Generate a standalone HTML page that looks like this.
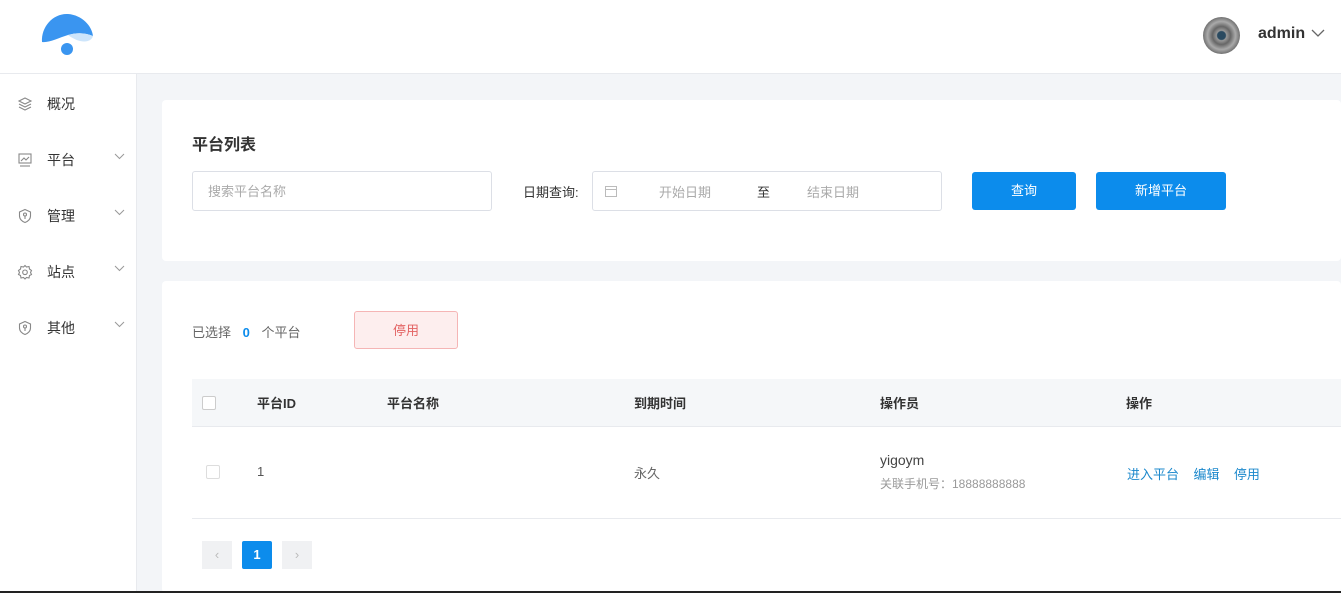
<!DOCTYPE html>
<html><head><meta charset="utf-8"><style>
*{margin:0;padding:0;box-sizing:border-box}
body{width:1341px;height:593px;overflow:hidden;background:#f3f5f8;font-family:"Liberation Sans","Noto Sans CJK SC",sans-serif;font-size:13px;color:#333;position:relative}
.hdr{position:absolute;left:0;top:0;width:1341px;height:74px;background:#fff;border-bottom:1px solid #e8eaee}
.side{position:absolute;left:0;top:74px;width:137px;height:519px;background:#fff;border-right:1px solid #e8eaee}
.mi{position:absolute;left:0;width:137px;height:20px}
.mi span{position:absolute;left:47px;top:0;font-size:14px;color:#333}
.mi svg.ic{position:absolute;left:17px;top:2px}
.mi .ch{position:absolute;left:114px;top:3px}
.card{position:absolute;background:#fff;border-radius:4px}
.abs{position:absolute}
.btn{position:absolute;background:#0c8cec;color:#fff;border-radius:3px;text-align:center;font-size:13px}
</style></head><body>
<div class="hdr">
<svg class="abs" style="left:40px;top:12px" width="56" height="46" viewBox="0 0 56 46"><path d="M2 30 C1 14 14 1 28 2 C42 3 52 14 53 24 C46 21 38 20 28 23 C18 26 9 31 2 30Z" fill="#3a95f0"/><path d="M28 23 C38 20 46 21 53 24 C51 31 40 32 28 23Z" fill="#cde5fb"/><circle cx="27" cy="37" r="6" fill="#3a95f0"/></svg>
<div class="abs" style="left:1203px;top:17px;width:37px;height:37px;border-radius:50%;background:radial-gradient(circle at 50% 50%,#2a4a60 0 4px,#999 5px,#666 9px,#aaa 14px,#777 18px)"></div>
<div class="abs" style="left:1258px;top:25px;font-size:16px;font-weight:bold;color:#333">admin</div>
<svg class="abs" style="left:1311px;top:29px" width="14" height="9"><path d="M1 1 L7 7 L13 1" fill="none" stroke="#666" stroke-width="1.3"/></svg>
</div>
<div class="side">
<div class="mi" style="top:20px"><svg class="ic" width="16" height="16" viewBox="0 0 16 16" fill="none" stroke="#888" stroke-width="1.1"><path d="M8 2 L14 5 L8 8 L2 5Z"/><path d="M2 8 L8 11 L14 8"/><path d="M2 11 L8 14 L14 11"/></svg><span>概况</span></div>
<div class="mi" style="top:76px"><svg class="ic" width="16" height="16" viewBox="0 0 16 16" fill="none" stroke="#888" stroke-width="1.1"><rect x="2" y="2" width="12" height="9"/><path d="M4 9 L7 6 L9 8 L12 5"/><path d="M3 14 H13"/></svg><span>平台</span><svg class="ch" width="11" height="7"><path d="M1 1 L5.5 5.5 L10 1" fill="none" stroke="#999"/></svg></div>
<div class="mi" style="top:132px"><svg class="ic" width="16" height="16" viewBox="0 0 16 16" fill="none" stroke="#888" stroke-width="1.1"><path d="M8 1.5 L13.5 4 V8 C13.5 11 11 13.5 8 14.5 C5 13.5 2.5 11 2.5 8 V4Z"/><circle cx="8" cy="6.5" r="1.5"/><path d="M8 8 V11"/></svg><span>管理</span><svg class="ch" width="11" height="7"><path d="M1 1 L5.5 5.5 L10 1" fill="none" stroke="#999"/></svg></div>
<div class="mi" style="top:188px"><svg class="ic" width="16" height="16" viewBox="0 0 16 16" fill="none" stroke="#888" stroke-width="1.1"><path d="M8 1.5 L9.5 3 L12 2.5 L12.5 5 L14.5 6.5 L13.5 8.5 L14.5 10.5 L12.5 11.5 L12 14 L9.5 13.5 L8 15 L6.5 13.5 L4 14 L3.5 11.5 L1.5 10.5 L2.5 8.5 L1.5 6.5 L3.5 5 L4 2.5 L6.5 3Z"/><circle cx="8" cy="8.3" r="2.3"/></svg><span>站点</span><svg class="ch" width="11" height="7"><path d="M1 1 L5.5 5.5 L10 1" fill="none" stroke="#999"/></svg></div>
<div class="mi" style="top:244px"><svg class="ic" width="16" height="16" viewBox="0 0 16 16" fill="none" stroke="#888" stroke-width="1.1"><path d="M8 1.5 L13.5 4 V8 C13.5 11 11 13.5 8 14.5 C5 13.5 2.5 11 2.5 8 V4Z"/><circle cx="8" cy="6.5" r="1.5"/><path d="M8 8 V11"/></svg><span>其他</span><svg class="ch" width="11" height="7"><path d="M1 1 L5.5 5.5 L10 1" fill="none" stroke="#999"/></svg></div>
</div>

<div class="card" style="left:162px;top:100px;width:1179px;height:161px">
<div class="abs" style="left:30px;top:31px;font-size:16px;font-weight:bold;color:#333">平台列表</div>
<div class="abs" style="left:30px;top:71px;width:300px;height:40px;border:1px solid #dcdfe6;border-radius:3px;color:#aaa;padding:9px 15px">搜索平台名称</div>
<div class="abs" style="left:361px;top:82px;color:#333">日期查询:</div>
<div class="abs" style="left:430px;top:71px;width:350px;height:40px;border:1px solid #dcdfe6;border-radius:3px">
<svg class="abs" style="left:12px;top:13px" width="12" height="12"><rect x="0.5" y="1.5" width="11" height="10" fill="none" stroke="#bbb"/><path d="M0.5 4.5 H11.5" stroke="#bbb"/></svg>
<span class="abs" style="left:66px;top:10px;color:#aaa">开始日期</span>
<span class="abs" style="left:164px;top:10px;color:#333">至</span>
<span class="abs" style="left:214px;top:10px;color:#aaa">结束日期</span></div>
<div class="btn" style="left:810px;top:72px;width:104px;height:38px;line-height:38px">查询</div>
<div class="btn" style="left:934px;top:72px;width:130px;height:38px;line-height:38px">新增平台</div>
</div>

<div class="card" style="left:162px;top:281px;width:1179px;height:312px">
<div class="abs" style="left:30px;top:41px;color:#666">已选择 <b style="color:#0c8cec;margin:0 8px">0</b> 个平台</div>
<div class="abs" style="left:192px;top:30px;width:104px;height:38px;background:#fdeeee;border:1px solid #f5b5b5;border-radius:3px;color:#e36262;text-align:center;line-height:38px">停用</div>
<div class="abs" style="left:30px;top:98px;width:1149px;height:48px;background:#f5f7f9;border-bottom:1px solid #e8eaee"></div>
<div class="abs" style="left:40px;top:115px;width:14px;height:14px;border:1px solid #ccc;background:#fff;border-radius:2px"></div>
<div class="abs" style="left:95px;top:112px;font-weight:bold">平台ID</div>
<div class="abs" style="left:225px;top:112px;font-weight:bold">平台名称</div>
<div class="abs" style="left:472px;top:112px;font-weight:bold">到期时间</div>
<div class="abs" style="left:718px;top:112px;font-weight:bold">操作员</div>
<div class="abs" style="left:964px;top:112px;font-weight:bold">操作</div>
<div class="abs" style="left:44px;top:184px;width:14px;height:14px;border:1px solid #ddd;border-radius:2px"></div>
<div class="abs" style="left:95px;top:183px;color:#555">1</div>
<div class="abs" style="left:472px;top:182px;color:#666">永久</div>
<div class="abs" style="left:718px;top:171px;color:#444;font-size:14px">yigoym</div>
<div class="abs" style="left:718px;top:194px;color:#999;font-size:12px">关联手机号：18888888888</div>
<div class="abs" style="left:965px;top:183px;color:#1b88cc">进入平台 &nbsp;&nbsp; 编辑 &nbsp;&nbsp; 停用</div>
<div class="abs" style="left:30px;top:237px;width:1149px;height:1px;background:#e8eaee"></div>
<div class="abs" style="left:40px;top:260px;width:30px;height:28px;background:#f0f1f3;color:#bbb;text-align:center;line-height:28px">‹</div>
<div class="abs" style="left:80px;top:260px;width:30px;height:28px;background:#0c8cec;color:#fff;text-align:center;line-height:28px;font-weight:bold;border-radius:2px">1</div>
<div class="abs" style="left:120px;top:260px;width:30px;height:28px;background:#f0f1f3;color:#bbb;text-align:center;line-height:28px">›</div>
</div>
<div class="abs" style="left:0;top:591px;width:1341px;height:2px;background:#222"></div>
</body></html>
